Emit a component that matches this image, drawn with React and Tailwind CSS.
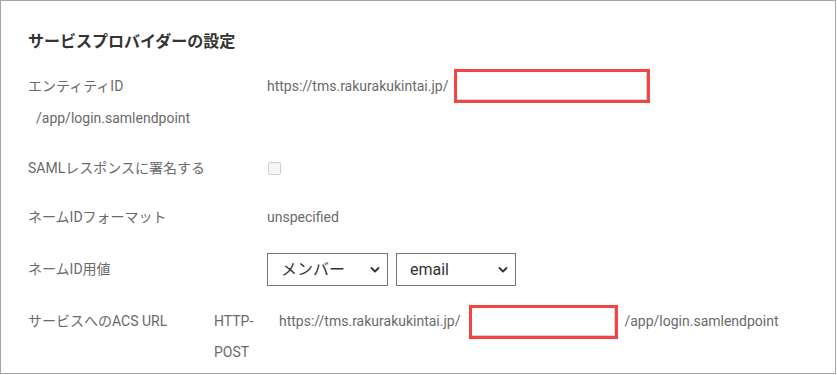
import React from "react";

const font = { fontFamily: 'Roboto, "Noto Sans CJK JP", sans-serif' };

function Chevron() {
  return (
    <svg width="10" height="7" viewBox="0 0 10 7" className="pointer-events-none absolute right-[8px] top-1/2 -translate-y-1/2">
      <path d="M1.5 1.5 L5 5 L8.5 1.5" fill="none" stroke="#333" strokeWidth="1.8" strokeLinecap="round" strokeLinejoin="round" />
    </svg>
  );
}

function Select({ w, value, options }) {
  return (
    <div className={`relative ${w} h-[33px]`}>
      <select
        defaultValue={value}
        className="appearance-none w-full h-full border border-[#767676] bg-white pl-[13px] pr-6 text-[16px] text-[#333] outline-none"
      >
        {options.map((o) => (
          <option key={o}>{o}</option>
        ))}
      </select>
      <Chevron />
    </div>
  );
}

function RedInput({ w }) {
  return (
    <div className={`${w} h-[34px] border-[3px] border-[#f44343] bg-white`}>
      <div className="w-full h-full border-r border-b border-[#d4d4d4]" />
    </div>
  );
}

export default function App() {
  return (
    <div className="w-[837px] h-[375px] bg-white" style={font}>
      <div className="w-[836px] h-[374px] border border-[#a5a5a5] pl-[27px] flex flex-col text-[14px] text-[#6a6a6a]">
        <div className="mt-[26px] h-[30px] flex items-center text-[16px] font-bold text-[#333]">
          サービスプロバイダーの設定
        </div>

        <div className="mt-[12px] h-[34px] flex items-center">
          <div className="w-[239px]">エンティティID</div>
          <div className="flex items-center gap-[6px]">
            <span>https://tms.rakurakukintai.jp/</span>
            <RedInput w="w-[196px]" />
          </div>
        </div>

        <div className="mt-[5px] h-[20px] flex items-center pl-[8px]">/app/login.samlendpoint</div>

        <div className="mt-[30px] h-[20px] flex items-center">
          <div className="w-[240px]">SAMLレスポンスに署名する</div>
          <div className="w-[13px] h-[13px] rounded-[2px] border border-[#cfcfcf] bg-[#f6f6f6]" />
        </div>

        <div className="mt-[29px] h-[20px] flex items-center">
          <div className="w-[239px]">ネームIDフォーマット</div>
          <span>unspecified</span>
        </div>

        <div className="mt-[26px] h-[33px] flex items-center">
          <div className="w-[239px]">ネームID用値</div>
          <div className="flex gap-[8px]">
            <Select w="w-[121px]" value="メンバー" options={["メンバー"]} />
            <Select w="w-[120px]" value="email" options={["email"]} />
          </div>
        </div>

        <div className="mt-[19px] flex items-start">
          <div className="w-[186px] h-[33px] flex items-center">サービスへのACS URL</div>
          <div className="w-[65px] leading-[31px] pt-[1px]">
            HTTP-
            <br />
            POST
          </div>
          <div className="h-[33px] flex items-center">
            <span>https://tms.rakurakukintai.jp/</span>
            <div className="ml-[9px]">
              <RedInput w="w-[149px]" />
            </div>
            <span className="ml-[6px]">/app/login.samlendpoint</span>
          </div>
        </div>
      </div>
    </div>
  );
}
